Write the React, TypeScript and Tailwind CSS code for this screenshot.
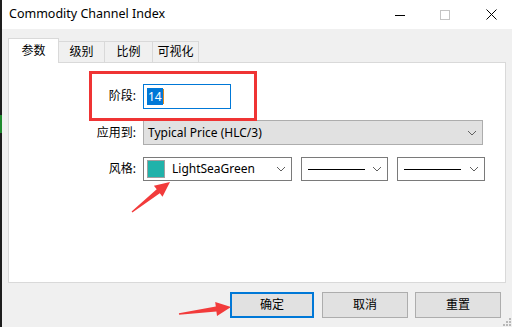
import React from "react";

const Chevron = () => (
  <svg width="10" height="6" viewBox="0 0 10 6" className="shrink-0">
    <path d="M1 1 L5 5 L9 1" fill="none" stroke="#606060" strokeWidth="1" />
  </svg>
);

export default function App() {
  const font = { fontFamily: '"Noto Sans", "Noto Sans CJK SC", sans-serif' };
  return (
    <div
      className="relative w-[512px] h-[327px] overflow-hidden flex bg-[#f0f0f0] text-[12px] text-black"
      style={font}
    >
      {/* dark desktop strip on the left */}
      <div className="w-[2px] h-full bg-[#1e1e1e] flex flex-col shrink-0">
        <div className="h-[115px]" />
        <div className="h-[18px] bg-[#1f8a2e]" />
      </div>

      {/* window */}
      <div className="flex-1 flex flex-col">
        {/* title bar */}
        <div className="h-[29px] bg-white flex items-center shrink-0">
          <div className="pl-[7px] text-[12.5px] leading-none text-[#000]">Commodity Channel Index</div>
          <div className="flex-1" />
          <svg width="10" height="10" viewBox="0 0 10 10" className="mr-[35px]">
            <path d="M0 5.5 H10" stroke="#000" strokeWidth="1" />
          </svg>
          <svg width="10" height="10" viewBox="0 0 10 10" className="mr-[36px]">
            <rect x="0.5" y="0.5" width="9" height="9" fill="none" stroke="#c4c4c4" strokeWidth="1" />
          </svg>
          <svg width="11" height="11" viewBox="0 0 11 11" className="mr-[15px]">
            <path d="M0.5 0.5 L10.5 10.5 M10.5 0.5 L0.5 10.5" stroke="#000" strokeWidth="1" />
          </svg>
        </div>

        {/* body */}
        <div className="flex-1 flex flex-col pt-[9px] px-[6px]">
          {/* tabs */}
          <div className="flex items-end h-[24px] relative z-10">
            <div className="w-[51px] h-[25px] bg-white border border-b-0 border-[#d9d9d9] flex items-center justify-center pb-[1px] -mb-[1px]">
              参数
            </div>
            <div className="w-[46px] h-[21px] border border-l-0 border-b-0 border-[#d9d9d9] flex items-center justify-center">
              级别
            </div>
            <div className="w-[48px] h-[21px] border border-l-0 border-b-0 border-[#d9d9d9] flex items-center justify-center">
              比例
            </div>
            <div className="w-[46px] h-[21px] border border-l-0 border-b-0 border-[#d9d9d9] flex items-center justify-center">
              可视化
            </div>
          </div>

          {/* panel */}
          <div className="w-[498px] h-[221px] bg-white border border-[#d9d9d9] flex flex-col">
            {/* row 1: red box */}
            <div className="mt-[8px] ml-[80px] w-[168px] h-[50px] border-[3px] border-[#ef3434] flex items-center relative z-10">
              <div className="w-[44px] text-right">阶段:</div>
              <div className="ml-[7px] w-[88px] h-[25px] border border-[#0078d7] bg-white flex items-center pl-[3px]">
                <span className="bg-[#0078d7] text-white px-[1px] leading-[17px]">14</span>
                <span className="w-[1px] h-[15px] bg-[#e08a1e]" />
              </div>
            </div>

            {/* row 2 */}
            <div className="flex items-center -mt-[1px]">
              <div className="w-[127px] text-right">应用到:</div>
              <div className="ml-[7px] w-[340px] h-[25px] bg-[#e1e1e1] border border-[#adadad] flex items-center pl-[4px] pr-[5px]">
                <span className="flex-1">Typical Price (HLC/3)</span>
                <Chevron />
              </div>
            </div>

            {/* row 3 */}
            <div className="flex items-center mt-[12px]">
              <div className="w-[127px] text-right">风格:</div>
              <div className="ml-[7px] w-[149px] h-[24px] bg-white border border-[#7a7a7a] flex items-center pl-[3px] pr-[5px]">
                <span className="w-[18px] h-[18px] bg-[#20b2aa] border border-[#a0a0a0]" />
                <span className="ml-[7px] flex-1">LightSeaGreen</span>
                <Chevron />
              </div>
              <div className="ml-[9px] w-[87px] h-[24px] bg-white border border-[#7a7a7a] flex items-center pl-[6px] pr-[5px]">
                <span className="w-[57px] h-[1px] bg-black" />
                <span className="flex-1" />
                <Chevron />
              </div>
              <div className="ml-[9px] w-[88px] h-[24px] bg-white border border-[#7a7a7a] flex items-center pl-[6px] pr-[5px]">
                <span className="w-[57px] h-[1px] bg-black" />
                <span className="flex-1" />
                <Chevron />
              </div>
            </div>
          </div>

          {/* buttons */}
          <div className="flex justify-end mt-[9px] pr-[5px]">
            <div className="w-[84px] h-[26px] bg-[#e1e1e1] border-2 border-[#0078d7] flex items-center justify-center">
              确定
            </div>
            <div className="ml-[8px] w-[86px] h-[26px] bg-[#e1e1e1] border border-[#adadad] flex items-center justify-center">
              取消
            </div>
            <div className="ml-[7px] w-[86px] h-[26px] bg-[#e1e1e1] border border-[#adadad] flex items-center justify-center">
              重置
            </div>
          </div>
        </div>
      </div>

      {/* resize grip */}
      <svg width="8" height="8" viewBox="0 0 8 8" className="absolute right-[1px] bottom-[1px]">
        <rect x="6" y="0" width="2" height="2" fill="#b8b8b8" />
        <rect x="3" y="3" width="2" height="2" fill="#b8b8b8" />
        <rect x="6" y="3" width="2" height="2" fill="#b8b8b8" />
        <rect x="0" y="6" width="2" height="2" fill="#b8b8b8" />
        <rect x="3" y="6" width="2" height="2" fill="#b8b8b8" />
        <rect x="6" y="6" width="2" height="2" fill="#b8b8b8" />
      </svg>

      {/* annotation arrows */}
      <svg width="512" height="327" className="absolute left-0 top-0 pointer-events-none">
        <polygon
          fill="#f23b3b"
          points="132.4,212.5 159.8,193.3 162.5,196.8 170,182 153.9,185.8 156.7,189.3 131.6,211.5"
        />
        <polygon
          fill="#f23b3b"
          points="179.1,314.7 216.4,311.5 217,315.9 231,307 215.2,302.1 215.8,306.5 178.9,313.3"
        />
      </svg>
    </div>
  );
}
